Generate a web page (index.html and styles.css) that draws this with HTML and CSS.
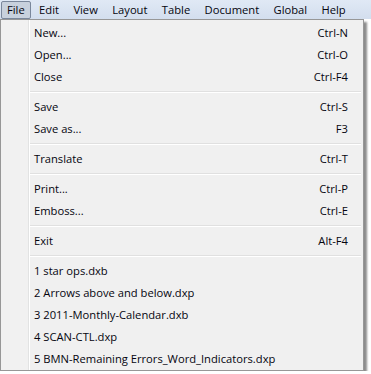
FILE: index.html
```html
<!DOCTYPE html>
<html lang="en">
<head>
    <meta charset="UTF-8">
    <title>File menu</title>
    <link rel="stylesheet" href="styles.css">
</head>
<body>
    <div class="menubar">
        <span class="menubar-item active">File</span>
        <span class="menubar-item">Edit</span>
        <span class="menubar-item">View</span>
        <span class="menubar-item">Layout</span>
        <span class="menubar-item">Table</span>
        <span class="menubar-item">Document</span>
        <span class="menubar-item">Global</span>
        <span class="menubar-item">Help</span>
    </div>

    <div class="menu">
        <div class="menu-item"><span>New...</span><span class="key">Ctrl-N</span></div>
        <div class="menu-item"><span>Open...</span><span class="key">Ctrl-O</span></div>
        <div class="menu-item"><span>Close</span><span class="key">Ctrl-F4</span></div>
        <div class="separator"></div>
        <div class="menu-item"><span>Save</span><span class="key">Ctrl-S</span></div>
        <div class="menu-item"><span>Save as...</span><span class="key">F3</span></div>
        <div class="separator"></div>
        <div class="menu-item"><span>Translate</span><span class="key">Ctrl-T</span></div>
        <div class="separator"></div>
        <div class="menu-item"><span>Print...</span><span class="key">Ctrl-P</span></div>
        <div class="menu-item"><span>Emboss...</span><span class="key">Ctrl-E</span></div>
        <div class="separator"></div>
        <div class="menu-item"><span>Exit</span><span class="key">Alt-F4</span></div>
        <div class="separator"></div>
        <div class="menu-item"><span>1 star ops.dxb</span></div>
        <div class="menu-item"><span>2 Arrows above and below.dxp</span></div>
        <div class="menu-item"><span>3 2011-Monthly-Calendar.dxb</span></div>
        <div class="menu-item"><span>4 SCAN-CTL.dxp</span></div>
        <div class="menu-item"><span>5 BMN-Remaining Errors_Word_Indicators.dxp</span></div>
    </div>
</body>
</html>
```

FILE: styles.css
```css
body {
    margin: 0;
    background: #ffffff;
    font-family: "Open Sans", "Liberation Sans", sans-serif;
    font-size: 11.2px;
    color: #05050f;
}

/* top menu bar */
.menubar {
    height: 19px;
    display: flex;
    align-items: center;
    padding-left: 1px;
    background: linear-gradient(#e0e9f5, #d3deee);
}

.menubar-item {
    height: 16px;
    line-height: 16px;
    padding: 0 5px;
    margin-right: 2.4px;
    border: 1px solid transparent;
    border-radius: 2px;
}

.menubar-item.active {
    background: #c8d1dd;
    border-color: #7a879b;
}

/* drop down */
.menu {
    width: 362px;
    padding: 1px 0;
    background: #f0f0f0;
    border: 1px solid #979797;
    box-shadow: 3px 3px 2px rgba(0, 0, 0, 0.45);
    background-image: linear-gradient(to right, #f1f1f1 27px, #e2e3e3 27px, #e2e3e3 28px, #ffffff 28px, #ffffff 29px, transparent 29px);
}

.menu-item {
    height: 22px;
    display: flex;
    align-items: center;
    justify-content: space-between;
    padding: 0 15px 0 33px;
}

.separator {
    height: 0;
    margin: 4px 2px 2px 29px;
    border-top: 1px solid #e0e0e0;
    border-bottom: 1px solid #ffffff;
}
```
